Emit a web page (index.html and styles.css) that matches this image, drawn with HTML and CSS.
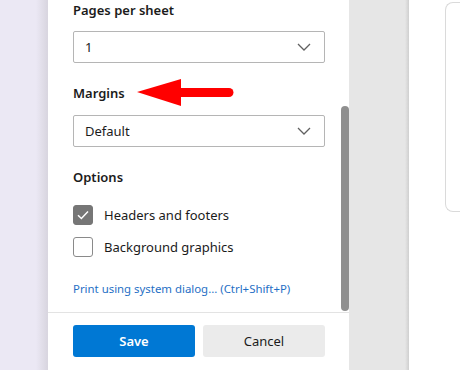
FILE: index.html
```html
<!DOCTYPE html>
<html lang="en">
<head>
  <meta charset="UTF-8" />
  <title>Print</title>
  <link rel="stylesheet" href="styles.css">
</head>
<body>
  <div class="backdrop"></div>

  <div class="dialog">
    <div class="scroll">
      <div class="content">
        <div class="label">Pages per sheet</div>
        <div class="select"><span>1</span>
          <svg class="chev" width="14" height="8" viewBox="0 0 14 8"><path d="M1 1l6 6 6-6" fill="none" stroke="#616161" stroke-width="1.3"/></svg>
        </div>

        <div class="label margins">Margins
          <svg class="arrow" width="100" height="30" viewBox="0 0 100 30">
            <polygon points="0,14 44,1 44,28" fill="#ff0000"/>
            <line x1="42" y1="14.5" x2="92" y2="14.5" stroke="#ff0000" stroke-width="9" stroke-linecap="round"/>
          </svg>
        </div>
        <div class="select"><span>Default</span>
          <svg class="chev" width="14" height="8" viewBox="0 0 14 8"><path d="M1 1l6 6 6-6" fill="none" stroke="#616161" stroke-width="1.3"/></svg>
        </div>

        <div class="label">Options</div>
        <label class="check-row">
          <span class="box checked">
            <svg width="12" height="10" viewBox="0 0 12 10"><path d="M1 5.2l3.4 3.3L11 1.5" fill="none" stroke="#fff" stroke-width="1.5"/></svg>
          </span>
          Headers and footers
        </label>
        <label class="check-row">
          <span class="box"></span>
          Background graphics
        </label>

        <a class="sys-link">Print using system dialog... (Ctrl+Shift+P)</a>
      </div>
      <div class="thumb"></div>
    </div>

    <div class="footer">
      <button class="btn primary">Save</button>
      <button class="btn">Cancel</button>
    </div>
  </div>

  <div class="gutter"></div>

  <div class="preview">
    <div class="page"></div>
  </div>
</body>
</html>
```

FILE: styles.css
```css
body {
  margin: 0;
  height: 370px;
  overflow: hidden;
  display: flex;
  font-family: "Noto Sans", "Open Sans", sans-serif;
  color: #1b1b1b;
  background: #fff;
}

.backdrop {
  width: 48px;
  flex-shrink: 0;
  background: linear-gradient(to right, #ebe8f4 0, #ebe8f4 36px, #d9d6e0 47px);
}

.dialog {
  width: 301px;
  flex-shrink: 0;
  display: flex;
  flex-direction: column;
  background: #fff;
}

.scroll {
  position: relative;
  height: 312px;
  border-bottom: 1px solid #e3e3e3;
  overflow: hidden;
}

.content {
  padding: 0 24px 0 25px;
}

.label {
  font-size: 13px;
  font-weight: 600;
  line-height: 20px;
  margin-top: 20px;
}

.content > .label:first-child {
  margin-top: 0;
}

.margins {
  position: relative;
}

.arrow {
  position: absolute;
  left: 64px;
  top: -5px;
}

.select {
  margin-top: 11px;
  height: 30px;
  border: 1px solid #b5b5b5;
  border-radius: 2px;
  display: flex;
  align-items: center;
  justify-content: space-between;
  padding: 0 13px 0 11px;
  font-size: 13px;
}

.margins + .select {
  margin-top: 12px;
}

.check-row {
  display: flex;
  align-items: center;
  gap: 11px;
  font-size: 13px;
  height: 20px;
  margin-top: 18px;
}

.check-row + .check-row {
  margin-top: 12px;
}

.box {
  width: 18px;
  height: 18px;
  border: 1px solid #8a8a8a;
  border-radius: 3px;
  display: flex;
  align-items: center;
  justify-content: center;
}

.box.checked {
  background: #767676;
  border-color: #767676;
}

.sys-link {
  display: block;
  margin-top: 23px;
  font-size: 11.4px;
  line-height: 18px;
  color: #1f6fc5;
}

.thumb {
  position: absolute;
  left: 293px;
  top: 106px;
  width: 8px;
  height: 205px;
  border-radius: 4px;
  background: #8f8f8f;
}

.footer {
  display: flex;
  gap: 8px;
  padding: 12px 24px 0 25px;
}

.btn {
  width: 122px;
  height: 32px;
  border: none;
  border-radius: 3px;
  background: #ebebeb;
  font-family: inherit;
  font-size: 13px;
  color: #1b1b1b;
}

.btn.primary {
  background: #0078d4;
  color: #fff;
  font-weight: 600;
}

.gutter {
  width: 60px;
  flex-shrink: 0;
  background: linear-gradient(to right, #e6e6e6 0, #e6e6e6 56px, #cfcfcf 60px);
}

.preview {
  flex: 1;
  padding: 2px 0 0 36px;
}

.page {
  height: 208px;
  border: 1px solid #dadada;
  border-right: none;
  border-radius: 8px 0 0 8px;
}
```
